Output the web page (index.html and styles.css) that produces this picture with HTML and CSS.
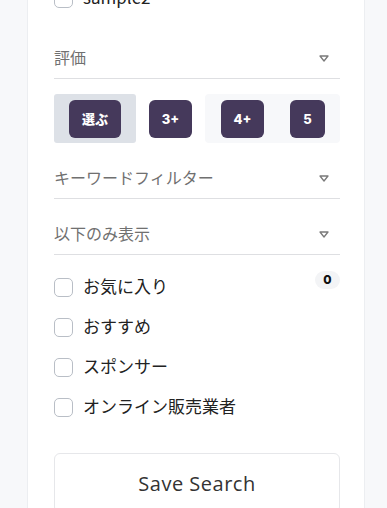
FILE: index.html
```html
<!DOCTYPE html>
<html lang="ja">
<head>
    <meta charset="UTF-8">
    <meta name="viewport" content="width=device-width, initial-scale=1.0">
    <title>フィルター</title>
    <link rel="stylesheet" href="styles.css">
</head>
<body>

<div class="panel">

    <!-- previous list (scrolled) -->
    <label class="check-row">
        <span class="box"></span>
        <span class="check-text">sample2</span>
    </label>

    <!-- Rating -->
    <div class="filter-head first">
        <span class="filter-title">評価</span>
        <svg class="caret" width="10" height="7" viewBox="0 0 10 7"><path d="M1 1 H9 L5 6 Z" fill="none" stroke="#7a7a7a" stroke-width="1.3" stroke-linejoin="round"/></svg>
    </div>
    <div class="rating">
        <div class="rate-cell picked"><button class="rate-btn">選ぶ</button></div>
        <div class="rate-cell"><button class="rate-btn">3+</button></div>
        <div class="rate-pair">
            <div class="rate-cell"><button class="rate-btn">4+</button></div>
            <div class="rate-cell"><button class="rate-btn">5</button></div>
        </div>
    </div>

    <!-- Keyword -->
    <div class="filter-head">
        <span class="filter-title">キーワードフィルター</span>
        <svg class="caret" width="10" height="7" viewBox="0 0 10 7"><path d="M1 1 H9 L5 6 Z" fill="none" stroke="#7a7a7a" stroke-width="1.3" stroke-linejoin="round"/></svg>
    </div>

    <!-- Only show -->
    <div class="filter-head">
        <span class="filter-title">以下のみ表示</span>
        <svg class="caret" width="10" height="7" viewBox="0 0 10 7"><path d="M1 1 H9 L5 6 Z" fill="none" stroke="#7a7a7a" stroke-width="1.3" stroke-linejoin="round"/></svg>
    </div>
    <div class="check-list">
        <label class="check-row">
            <span class="box"></span>
            <span class="check-text">お気に入り</span>
            <span class="count">0</span>
        </label>
        <label class="check-row">
            <span class="box"></span>
            <span class="check-text">おすすめ</span>
        </label>
        <label class="check-row">
            <span class="box"></span>
            <span class="check-text">スポンサー</span>
        </label>
        <label class="check-row">
            <span class="box"></span>
            <span class="check-text">オンライン販売業者</span>
        </label>
    </div>

    <button class="save-btn">Save Search</button>
</div>

</body>
</html>
```

FILE: styles.css
```css
body {
    margin: 0;
    background-color: #f7f8fa;
    font-family: "Noto Sans CJK JP", "Noto Sans", sans-serif;
    overflow: hidden;
}
.panel {
    margin: -23px 0 0 27px;
    width: 286px;
    padding: 0 24px 0 26px;
    background-color: #fff;
    border-left: 1px solid #eceef1;
    border-right: 1px solid #eceef1;
}
.check-row {
    display: flex;
    align-items: center;
    height: 40px;
}
.box {
    width: 17px;
    height: 17px;
    border: 1.5px solid #b9bec6;
    border-radius: 5px;
    margin-top: 2px;
}
.check-text {
    margin-left: 10px;
    font-size: 17px;
    line-height: 22px;
    color: #222;
}
.count {
    margin-left: auto;
    align-self: flex-start;
    margin-top: 5px;
    width: 25px;
    height: 18px;
    border-radius: 9px;
    background-color: #f3f4f6;
    font-family: "Inter", sans-serif;
    font-weight: 800;
    font-size: 12px;
    line-height: 18px;
    text-align: center;
    color: #111;
}
.filter-head {
    display: flex;
    align-items: flex-end;
    justify-content: space-between;
    height: 56px;
    box-sizing: border-box;
    padding-bottom: 10px;
    border-bottom: 1px solid #dedfe2;
}
.filter-head.first {
    height: 62px;
}
.filter-title {
    font-size: 16px;
    line-height: 22px;
    color: #707070;
}
.caret {
    margin: 0 11px 6px 0;
}
.rating {
    display: grid;
    grid-template-columns: 82px 69px 1fr;
    height: 49px;
    margin-top: 15px;
}
.rate-cell {
    display: flex;
    align-items: center;
    justify-content: center;
    flex: 1;
}
.rate-cell.picked {
    background-color: #dde1e7;
    border-radius: 3px;
}
.rate-pair {
    display: flex;
    padding-left: 5px;
    background-color: #f7f8fa;
    border-radius: 4px;
}
.rate-btn {
    height: 38px;
    padding: 0 13px;
    border: none;
    border-radius: 6px;
    background-color: #45395b;
    color: #fff;
    font-family: "Inter", "Noto Sans CJK JP", sans-serif;
    font-weight: 800;
    font-size: 13px;
    cursor: pointer;
}
.check-list {
    margin-top: 11px;
}
.save-btn {
    display: block;
    width: 100%;
    height: 60px;
    margin-top: 27px;
    background-color: #fff;
    border: 1px solid #e6e7ea;
    border-radius: 6px;
    font-family: "Open Sans", sans-serif;
    font-weight: 500;
    font-size: 20px;
    letter-spacing: 0.5px;
    color: #333;
    cursor: pointer;
}
```
